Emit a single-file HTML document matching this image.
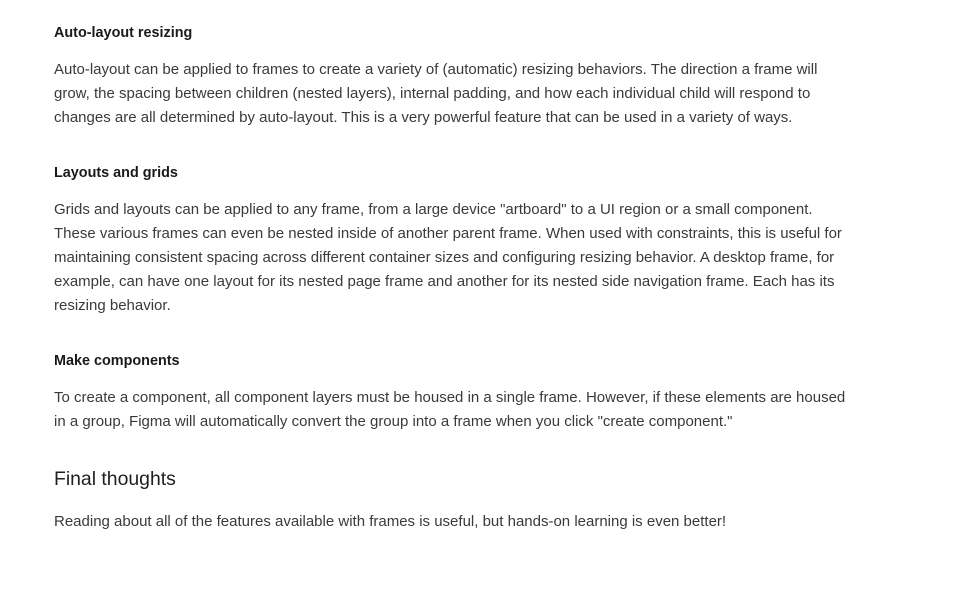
<html><head><style>
body{margin:0;background:#fff;width:954px;height:594px;position:relative;font-family:"Liberation Sans",sans-serif;}
.l{position:absolute;left:54px;white-space:nowrap;font-size:15px;color:#3a3a3a;line-height:24px;}
.h{font-weight:bold;color:#1a1a1a;font-size:14.4px;}
.b{font-size:19.4px;color:#1f1f1f;line-height:28px;}
</style></head><body>
<div class="l h" style="top:21px">Auto-layout resizing</div>
<div class="l" style="top:58px">Auto-layout can be applied to frames to create a variety of (automatic) resizing behaviors. The direction a frame will</div>
<div class="l" style="top:82px">grow, the spacing between children (nested layers), internal padding, and how each individual child will respond to</div>
<div class="l" style="top:106px">changes are all determined by auto-layout. This is a very powerful feature that can be used in a variety of ways.</div>
<div class="l h" style="top:161px">Layouts and grids</div>
<div class="l" style="top:198px">Grids and layouts can be applied to any frame, from a large device "artboard" to a UI region or a small component.</div>
<div class="l" style="top:222px">These various frames can even be nested inside of another parent frame. When used with constraints, this is useful for</div>
<div class="l" style="top:246px">maintaining consistent spacing across different container sizes and configuring resizing behavior. A desktop frame, for</div>
<div class="l" style="top:270px">example, can have one layout for its nested page frame and another for its nested side navigation frame. Each has its</div>
<div class="l" style="top:294px">resizing behavior.</div>
<div class="l h" style="top:349px">Make components</div>
<div class="l" style="top:386px">To create a component, all component layers must be housed in a single frame. However, if these elements are housed</div>
<div class="l" style="top:410px">in a group, Figma will automatically convert the group into a frame when you click "create component."</div>
<div class="l b" style="top:465px">Final thoughts</div>
<div class="l" style="top:510px">Reading about all of the features available with frames is useful, but hands-on learning is even better!</div>
</body></html>
